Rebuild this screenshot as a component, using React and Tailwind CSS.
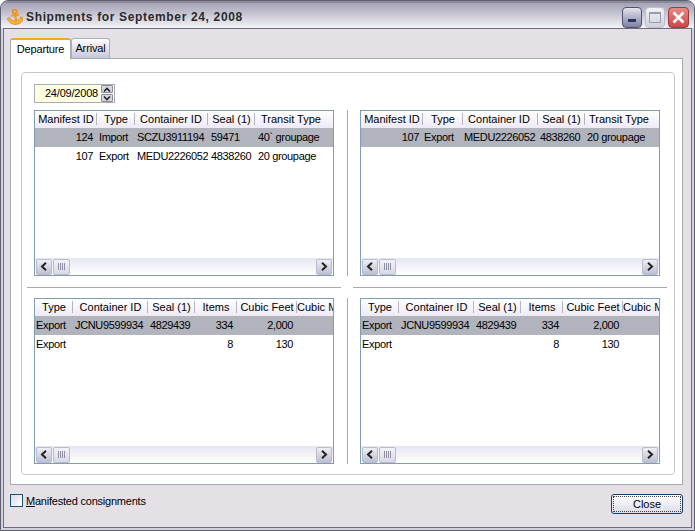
const font = { fontFamily: '"Liberation Sans", Arial, sans-serif' };

const Anchor = () => (
  <svg width="17" height="16" viewBox="0 0 17 16" className="shrink-0">
    <g transform="rotate(-10 8.5 8)">
      <circle cx="9.5" cy="2.6" r="2" fill="none" stroke="#f08c10" strokeWidth="1.7" />
      <path d="M5.5 6.2h8M9.5 4.5V12" stroke="#f49a18" strokeWidth="2.2" fill="none" />
      <path d="M1 8.5 L3.4 7.4 L4.6 10 C6 11.6 8 12 9.5 12 C11.5 12 13.4 11.4 14.6 9 L16.4 9.6 L15.6 13 C13.6 15 11.4 15.6 9.2 15.6 C6 15.6 2.8 13.6 1 8.5Z" fill="#f8b428" stroke="#d87810" strokeWidth="0.6" />
    </g>
  </svg>
);

const Arrow = ({ dir }) => (
  <svg width="8" height="9" viewBox="0 0 8 9">
    <path d={dir === 'l' ? 'M6 0.8 L2 4.5 L6 8.2' : 'M2 0.8 L6 4.5 L2 8.2'} fill="none" stroke="#222" strokeWidth="2" />
  </svg>
);

const ScrollBtn = ({ dir }) => (
  <div className="w-[16px] h-[16px] rounded-[2px] border border-[#b8bccb] bg-gradient-to-b from-[#eeeef6] to-[#bdbfd2] flex items-center justify-center shrink-0">
    <Arrow dir={dir} />
  </div>
);

const Scrollbar = () => (
  <div className="mt-auto h-[17px] flex items-center pl-px pr-px bg-gradient-to-b from-[#e6e6f2] to-white shrink-0">
    <ScrollBtn dir="l" />
    <div className="w-[17px] h-[16px] ml-px rounded-[2px] border border-[#b8bccb] bg-gradient-to-b from-[#f2f2f8] to-[#d8d9e6] flex items-center justify-center gap-px shrink-0">
      <span className="w-px h-[7px] bg-[#8e90a4]" /><span className="w-px h-[7px] bg-[#8e90a4]" /><span className="w-px h-[7px] bg-[#8e90a4]" /><span className="w-px h-[7px] bg-[#8e90a4]" />
    </div>
    <div className="flex-1" />
    <ScrollBtn dir="r" />
  </div>
);

const Table = ({ cols, rows }) => (
  <div className="w-[300px] h-[166px] border border-[#7f9db9] bg-white flex flex-col overflow-hidden">
    <div className="h-[17px] flex bg-gradient-to-b from-white to-[#eeeaf6] shrink-0 overflow-hidden">
      {cols.map((c) => (
        <div key={c.t} style={{ width: c.w, paddingRight: c.hp || 0 }} className="shrink-0 relative text-center whitespace-nowrap leading-[17px] text-black overflow-hidden">
          {c.t}
          {!c.last && <span className="absolute right-0 top-[2px] h-[12px] w-px bg-[#b4b4c4]" />}
        </div>
      ))}
    </div>
    {rows.map((r) => (
      <div key={r.id} className={`h-[19px] flex shrink-0 leading-[19px] text-black tracking-[-0.35px] ${r.sel ? 'bg-[#b1b3bd]' : ''}`}>
        {cols.map((c, i) => (
          <div key={c.t} style={{ width: c.w, paddingLeft: c.right ? 0 : c.pl }} className={`shrink-0 whitespace-nowrap overflow-hidden ${c.right ? 'text-right pr-[4px]' : ''}`}>
            {r.c[i]}
          </div>
        ))}
      </div>
    ))}
    <Scrollbar />
  </div>
);

const leftCols = [
  { t: 'Manifest ID', w: 62, right: true },
  { t: 'Type', w: 38, pl: 2 },
  { t: 'Container ID', w: 73, pl: 2, hp: 1 },
  { t: 'Seal (1)', w: 47, pl: 3 },
  { t: 'Transit Type', w: 78, last: true, hp: 6, pl: 3 },
];
const rightCols = [
  { t: 'Manifest ID', w: 62, right: true },
  { t: 'Type', w: 40, pl: 1 },
  { t: 'Container ID', w: 75, pl: 1, hp: 3 },
  { t: 'Seal (1)', w: 47, pl: 2 },
  { t: 'Transit Type', w: 74, last: true, hp: 6, pl: 2 },
];
const botCols = [
  { t: 'Type', w: 38, pl: 1 },
  { t: 'Container ID', w: 75, pl: 2 },
  { t: 'Seal (1)', w: 47, pl: 2 },
  { t: 'Items', w: 42, right: true },
  { t: 'Cubic Feet', w: 60, right: true },
  { t: 'Cubic Meters', w: 60, last: true, pl: 2 },
];
const botRows = [
  { id: 1, sel: true, c: ['Export', 'JCNU9599934', '4829439', '334', '2,000', ''] },
  { id: 2, c: ['Export', '', '', '8', '130', ''] },
];

const Sep = () => <div className="h-[2px] bg-[#a6a9b0] border-b border-white" />;
const VSep = () => <div className="pl-[13px]"><div className="w-[2px] h-full bg-[#a6a9b0] border-r border-white" /></div>;

export default function App() {
  return (
    <div style={font} className="w-[695px] h-[531px] text-[11px] flex flex-col bg-[#d2d2dc] border border-[#5e5e6e] rounded-t-[8px] overflow-hidden">
      <div className="h-[27px] shrink-0 flex items-center pl-[5px] pr-[5px] pt-[3px] border-t-2 border-[#8a8a98] bg-gradient-to-b from-[#a5a3b6] to-[#f4f3f8]">
        <Anchor />
        <div className="ml-[3px] font-bold text-[12px] text-[#2a2a2a] tracking-[0.65px] whitespace-nowrap">Shipments for September 24, 2008</div>
        <div className="ml-auto flex gap-[3px] items-center">
          <div className="w-[20px] h-[21px] rounded-[4px] border border-[#50546c] bg-gradient-to-b from-[#e4e5ee] to-[#7e82a0] flex items-end justify-center pb-[5px]">
            <span className="w-[8px] h-[3px] bg-[#2b3558]" />
          </div>
          <div className="w-[20px] h-[21px] rounded-[4px] border border-[#c0c0cc] bg-gradient-to-b from-[#f2f2f6] to-[#cfd0dc] flex items-center justify-center">
            <span className="w-[12px] h-[11px] border border-[#9a9cac] border-t-2" />
          </div>
          <div className="w-[21px] h-[21px] rounded-[4px] border border-[#a03838] bg-gradient-to-b from-[#e88888] to-[#c84848] flex items-center justify-center">
            <svg width="13" height="13" viewBox="0 0 13 13"><path d="M1.5 1.5 L11.5 11.5 M11.5 1.5 L1.5 11.5" stroke="#fff" strokeWidth="2.6" /></svg>
          </div>
        </div>
      </div>

      <div className="flex-1 mx-[2px] mb-[2px] bg-[#e4e0e6] border border-[#6e6e7e] pt-[8px] pl-[6px] pr-[8px] flex flex-col min-h-0">
        <div className="h-[21px] flex items-end shrink-0">
          <div className="h-[21px] w-[61px] border-x border-[#a6aab0] border-t-2 border-t-[#f5a623] rounded-t-[3px] bg-white flex items-center justify-center relative -mb-px z-10 tracking-[-0.15px]">Departure</div>
          <div className="h-[20px] w-[39px] border-x border-t border-[#a6b4b8] rounded-t-[3px] bg-gradient-to-b from-white to-[#c6c8dc] flex items-center justify-center tracking-[-0.15px]">Arrival</div>
        </div>
        <div className="h-[427px] border border-[#a6aaa8] bg-white pt-[13px] pl-[10px] pr-[7px] shrink-0">
          <div className="h-[403px] border border-[#c6c8cc] rounded-[4px] pt-[11px] pl-[12px] flex flex-col">
            <div className="h-[19px] w-[81px] border border-[#a8acb4] flex items-center bg-[#ffffe0] shrink-0">
              <span className="flex-1 text-right pr-[2px] tracking-[-0.2px]">24/09/2008</span>
              <div className="w-[14px] h-full bg-white flex flex-col items-center justify-center gap-px">
                <div className="w-[12px] h-[8px] border border-[#8a8c9c] rounded-[1px] bg-[#d6d6e2] flex items-center justify-center">
                  <svg width="8" height="5" viewBox="0 0 8 5"><path d="M1 4.5 L4 1.5 L7 4.5" fill="none" stroke="#222" strokeWidth="1.6" /></svg>
                </div>
                <div className="w-[12px] h-[8px] border border-[#8a8c9c] rounded-[1px] bg-[#d6d6e2] flex items-center justify-center">
                  <svg width="8" height="5" viewBox="0 0 8 5"><path d="M1 .5 L4 3.5 L7 .5" fill="none" stroke="#222" strokeWidth="1.6" /></svg>
                </div>
              </div>
            </div>
            <div className="mt-[7px] grid grid-cols-[300px_26px_300px]">
              <Table cols={leftCols} rows={[
                { id: 1, sel: true, c: ['124', 'Import', 'SCZU3911194', '59471', '40` groupage'] },
                { id: 2, c: ['107', 'Export', 'MEDU2226052', '4838260', '20 groupage'] },
              ]} />
              <VSep />
              <Table cols={rightCols} rows={[
                { id: 1, sel: true, c: ['107', 'Export', 'MEDU2226052', '4838260', '20 groupage'] },
              ]} />
              <div className="-ml-[7px] -mr-[7px] pt-[11px] pb-[9px]"><Sep /></div>
              <div />
              <div className="-ml-[7px] -mr-[7px] pt-[11px] pb-[9px]"><Sep /></div>
              <Table cols={botCols} rows={botRows} />
              <VSep />
              <Table cols={botCols} rows={botRows} />
            </div>
          </div>
        </div>
        <div className="flex items-start mt-[9px]">
          <div className="w-[13px] h-[13px] border border-[#1c5180] bg-gradient-to-br from-[#dcdce4] to-white shrink-0" />
          <span className="ml-[3px] text-black leading-[14px] tracking-[-0.22px]"><span className="underline">M</span>anifested consignments</span>
          <button className="ml-auto w-[72px] h-[20px] rounded-[3px] border border-[#0f3f70] bg-gradient-to-b from-white to-[#dcdcea] text-black relative">
            Close
            <span className="absolute inset-[1px] border border-dotted border-[#444]" />
          </button>
        </div>
      </div>
    </div>
  );
}
